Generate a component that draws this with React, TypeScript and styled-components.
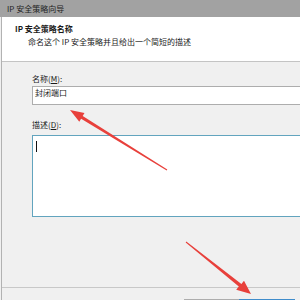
import React from 'react';
import styled, { createGlobalStyle } from 'styled-components';

const GlobalStyle = createGlobalStyle`
  html, body {
    margin: 0;
    padding: 0;
    background: #f0f0f0;
  }
  body {
    font-family: "Noto Sans CJK SC", "Noto Sans", sans-serif;
    color: #1a1a1a;
  }
`;

const App: React.FC = () => {
  return (
    <Window>
      <GlobalStyle />
      <TitleBar>IP 安全策略向导</TitleBar>
      <Frame>
        <Header>
          <Heading>IP 安全策略名称</Heading>
          <SubTitle>命名这个 IP 安全策略并且给出一个简短的描述</SubTitle>
        </Header>
        <Body>
          <FieldLabel>
            名称(<u>M</u>):
          </FieldLabel>
          <NameInput>封闭端口</NameInput>
          <FieldLabel gap={14}>
            描述(<u>D</u>):
          </FieldLabel>
          <DescBox gap={4}>
            <Caret />
          </DescBox>
        </Body>
        <Footer>
          <WizardButton />
          <WizardButton primary />
        </Footer>
      </Frame>
      <Arrows viewBox="0 0 300 300" width={300} height={300}>
        <polygon points="70,110 84.5,113.1 82.7,116.1 167.3,169.6 166.7,170.4 81.1,118.7 79.3,121.7" />
        <polygon points="251,294 236.2,289.7 238.8,286.6 185.7,242.4 186.3,241.6 241.4,283.9 244,280.7" />
      </Arrows>
    </Window>
  );
};

const Window = styled.div`
  position: relative;
  width: 300px;
  height: 300px;
  overflow: hidden;
  display: flex;
  flex-direction: column;
  background: #f0f0f0;
`;

const TitleBar = styled.div`
  height: 17px;
  flex-shrink: 0;
  background: #a2a2a2;
  padding-left: 7px;
  font-size: 8px;
  line-height: 17px;
  color: #1e1e1e;
`;

const Frame = styled.div`
  flex: 1;
  display: flex;
  flex-direction: column;
  margin-left: 1px;
  border-left: 1px solid #b2b2b2;
`;

const Header = styled.div`
  height: 45px;
  flex-shrink: 0;
  box-sizing: border-box;
  background: #ffffff;
  border-bottom: 1px solid #c4c4c4;
  padding: 6px 0 0 13px;
`;

const Heading = styled.div`
  font-size: 8px;
  line-height: 12px;
  font-weight: 700;
`;

const SubTitle = styled.div`
  font-size: 8px;
  line-height: 12px;
  margin-top: 1px;
  padding-left: 13px;
`;

const Body = styled.div`
  flex: 1;
  display: flex;
  flex-direction: column;
  padding: 11px 0 0 30px;
`;

const FieldLabel = styled.div<{ gap?: number }>`
  font-size: 8px;
  line-height: 12px;
  margin-top: ${p => p.gap ?? 0}px;

  u {
    text-decoration-thickness: 1px;
    text-underline-offset: 1px;
  }
`;

const NameInput = styled.div`
  margin-top: 1px;
  width: 300px;
  height: 19px;
  box-sizing: border-box;
  background: #ffffff;
  border: 1px solid #adadad;
  padding: 0 0 0 2px;
  font-size: 8px;
  line-height: 12px;
`;

const DescBox = styled.div<{ gap?: number }>`
  margin-top: ${p => p.gap ?? 0}px;
  width: 300px;
  height: 82px;
  box-sizing: border-box;
  background: #ffffff;
  border: 1px solid #62a4be;
  padding: 5px 0 0 3px;
`;

const Caret = styled.div`
  width: 1px;
  height: 11px;
  background: #111;
`;

const Footer = styled.div`
  height: 13px;
  flex-shrink: 0;
  border-top: 1px solid #c8c8c8;
  display: flex;
  justify-content: flex-end;
  padding: 11px 5px 0 0;
  box-sizing: border-box;
  align-items: flex-start;
`;

const WizardButton = styled.div<{ primary?: boolean }>`
  width: 56px;
  height: 22px;
  flex-shrink: 0;
  box-sizing: border-box;
  border: 1px solid ${p => (p.primary ? '#3f8ccb' : '#adadad')};
  background: ${p => (p.primary ? '#e5f1fb' : '#e1e1e1')};
  margin-left: ${p => (p.primary ? '-1px' : '0')};
`;

const Arrows = styled.svg`
  position: absolute;
  left: 0;
  top: 0;
  pointer-events: none;
  fill: #e8403b;
`;

export default App;
